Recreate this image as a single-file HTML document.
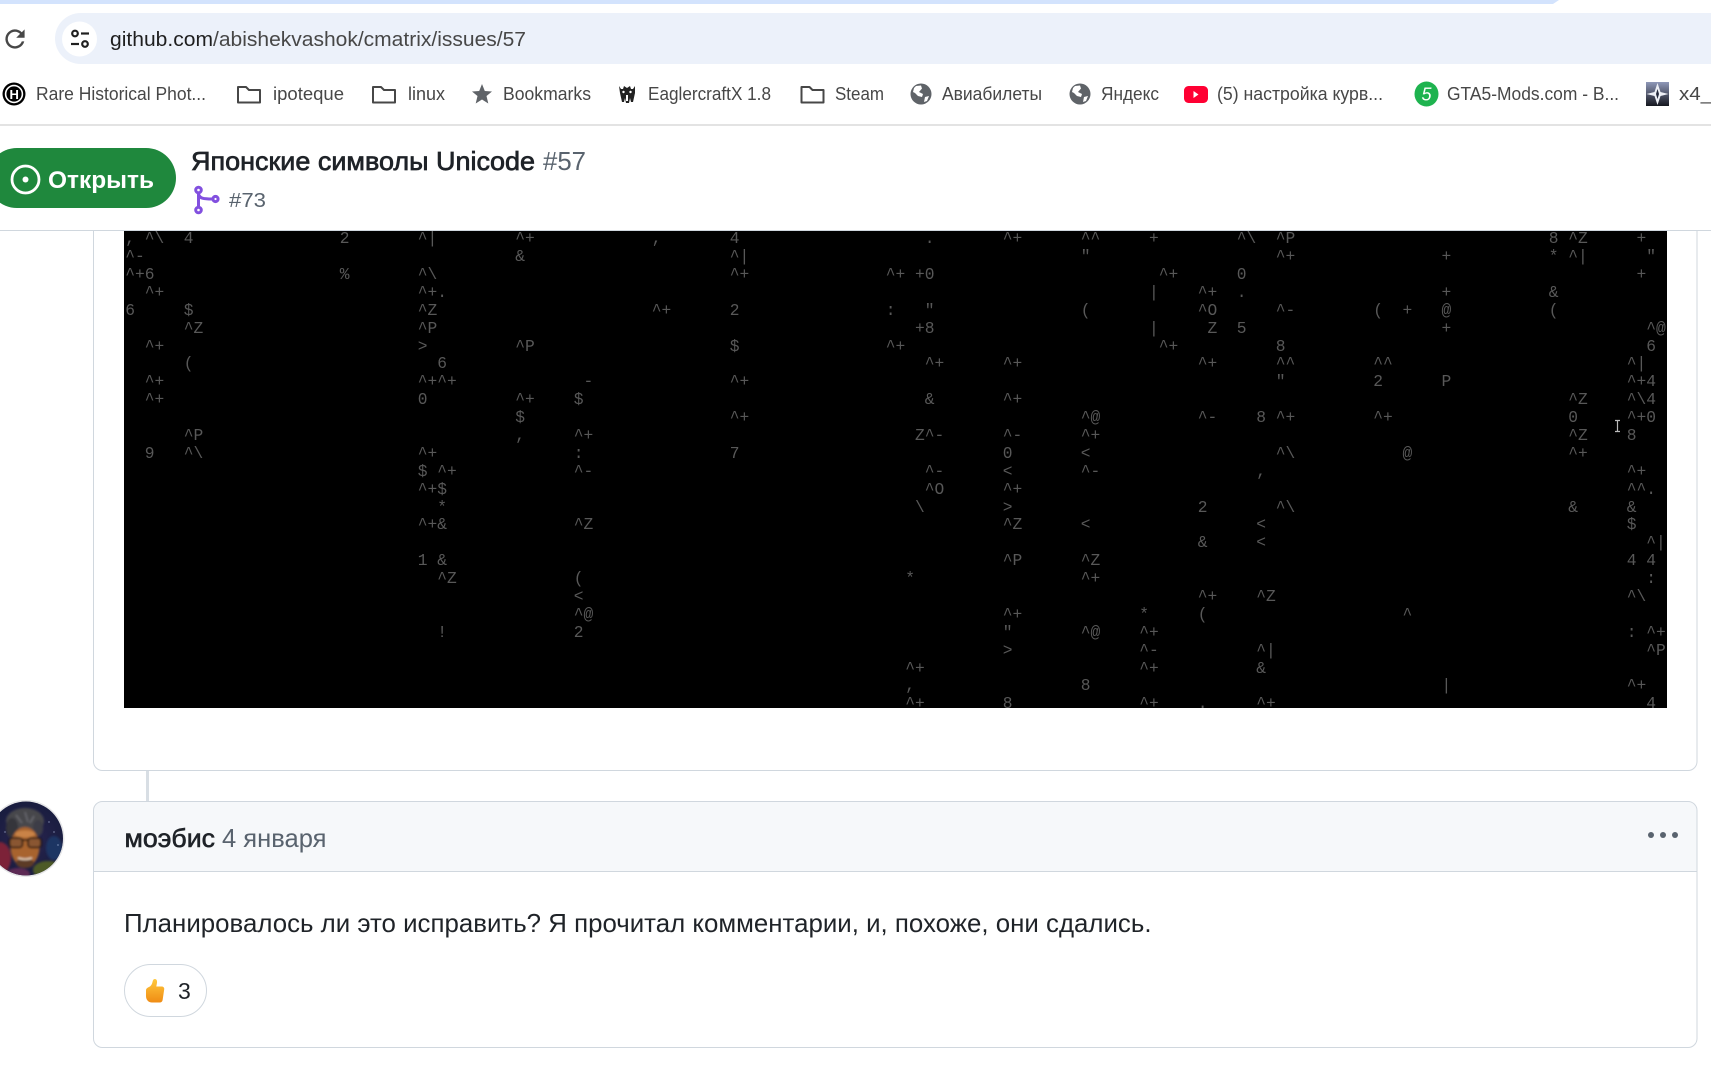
<!DOCTYPE html>
<html lang="ru"><head><meta charset="utf-8"><title>Японские символы Unicode #57</title>
<style>
html,body{margin:0;padding:0;width:1711px;height:1066px;overflow:hidden;background:#fff}
svg{position:absolute;left:0;top:0}
text{font-family:"Liberation Sans",sans-serif}
#t{position:absolute;left:124px;top:231px;width:1543px;height:477px;background:#000;overflow:hidden;font:16.25px/17.9px "Liberation Mono",monospace;color:#585858}
#t div{position:relative;height:17.9px;top:-0.8px}
#t b{position:absolute;font-weight:400;white-space:pre;left:calc(1.3px + var(--c)*9.75px)}
</style></head><body>
<svg width="1711" height="1066" viewBox="0 0 1711 1066" xmlns="http://www.w3.org/2000/svg">
<defs>
<clipPath id="av"><circle cx="26" cy="838.500" r="37"/></clipPath>
<filter id="bl"><feGaussianBlur stdDeviation="1"/></filter>
<linearGradient id="th" x1="0" y1="0" x2="0" y2="1"><stop offset="0" stop-color="#ffc83d"/><stop offset="1" stop-color="#f08c14"/></linearGradient>
<linearGradient id="x4" x1="0" y1="0" x2="0" y2="1"><stop offset="0" stop-color="#8f98b8"/><stop offset="1" stop-color="#15171f"/></linearGradient>
<radialGradient id="sky" cx="50%" cy="50%" r="60%"><stop offset="0" stop-color="#2a2550"/><stop offset="1" stop-color="#141a3a"/></radialGradient>
</defs>
<!-- browser chrome -->
<path d="M0 0H1559L1553 4H0Z" fill="#d3e3fd"/>
<rect x="55" y="13" width="1720" height="51" rx="25.5" fill="#ecf1fa"/>
<path transform="translate(.6 24.6) scale(1.2)" fill="#474747" d="M17.65 6.35A8 8 0 1 0 19.73 14h-2.08A6 6 0 1 1 12 6c1.66 0 3.14.69 4.22 1.78L13 11h7V4z"/>
<circle cx="79.500" cy="39" r="17.500" fill="#fff"/>
<g fill="none" stroke="#1f1f1f" stroke-width="2.200">
<circle cx="75" cy="33.500" r="2.800"/><path d="M81 33.500h8"/>
<circle cx="85" cy="44" r="2.800"/><path d="M71 44h8"/>
</g>
<text x="110" y="46" font-size="20" fill="#1f1f1f" textLength="103" lengthAdjust="spacingAndGlyphs">github.com</text>
<text x="213" y="46" font-size="20" fill="#474747" textLength="313" lengthAdjust="spacingAndGlyphs">/abishekvashok/cmatrix/issues/57</text>
<!-- bookmarks -->
<g font-size="18" fill="#474747">
<circle cx="14" cy="94" r="11.500" fill="#000"/><circle cx="14" cy="94" r="9.200" fill="#fff"/><circle cx="14" cy="94" r="7.600" fill="#000"/>
<text x="9.500" y="99" font-size="13" font-weight="700" fill="#fff">H</text>
<text x="36" y="100" textLength="170" lengthAdjust="spacingAndGlyphs">Rare Historical Phot...</text>
<g fill="none" stroke="#474747" stroke-width="2" stroke-linejoin="round">
<path d="M238 87h8l3 3h11v12.500h-22z"/>
<path d="M373 87h8l3 3h11v12.500h-22z"/>
<path d="M801.500 87h8l3 3h11v12.500h-22z"/>
</g>
<text x="273" y="100" textLength="71" lengthAdjust="spacingAndGlyphs">ipoteque</text>
<text x="408" y="100" textLength="37" lengthAdjust="spacingAndGlyphs">linux</text>
<polygon points="482,84 484.800,91 492,91.500 486.500,96 488.300,103.500 482,99.500 475.700,103.500 477.500,96 472,91.500 479.200,91" fill="#5f6368"/>
<text x="503" y="100" textLength="88" lengthAdjust="spacingAndGlyphs">Bookmarks</text>
<g fill="#222"><path d="M619 86l2 3h2l1-3 3 2 3-2 1 3h2l2-3v7l-2 9h-2l-1-4-1 5h-3l-1-5-1 4h-2l-2-9z"/></g>
<g fill="#fff"><circle cx="623.500" cy="92" r="1.200"/><circle cx="630.500" cy="92" r="1.200"/><rect x="626" y="95" width="2" height="6"/></g>
<text x="648" y="100" textLength="123" lengthAdjust="spacingAndGlyphs">EaglercraftX 1.8</text>
<text x="835" y="100" textLength="49" lengthAdjust="spacingAndGlyphs">Steam</text>
<circle cx="921" cy="94" r="10.500" fill="#5f6368"/>
<path d="M916 86l5-.5 1 3-3 3.500 4 2-1 3-4-1-3-3-2-1 1-4zM925 97l4-1-2 5-3 1z" fill="#fff"/>
<text x="942" y="100" textLength="100" lengthAdjust="spacingAndGlyphs">Авиабилеты</text>
<circle cx="1080" cy="94" r="10.500" fill="#5f6368"/>
<path d="M1075 86l5-.5 1 3-3 3.500 4 2-1 3-4-1-3-3-2-1 1-4zM1084 97l4-1-2 5-3 1z" fill="#fff"/>
<text x="1101" y="100" textLength="58" lengthAdjust="spacingAndGlyphs">Яндекс</text>
<rect x="1184" y="86" width="24" height="17" rx="4.500" fill="#ff0033"/><path d="M1193.500 91l5 3.500-5 3.500z" fill="#fff"/>
<text x="1217" y="100" textLength="166" lengthAdjust="spacingAndGlyphs">(5) настройка курв...</text>
<ellipse cx="1426.500" cy="94" rx="12" ry="12.500" fill="#1eb34f"/>
<text x="1421.500" y="100.500" font-size="18" font-style="italic" fill="#fff">5</text>
<text x="1447" y="100" textLength="172" lengthAdjust="spacingAndGlyphs">GTA5-Mods.com - В...</text>
<rect x="1646" y="82" width="23" height="24" fill="url(#x4)"/>
<path d="M1657.500 83l3 9 8 2-8 2-3 9-3-9-8-2 8-2z" fill="#eef0f6"/><path d="M1657.500 89l1.500 5-1.500 5-1.500-5z" fill="#23283a"/>
<text x="1679" y="100" textLength="40" lengthAdjust="spacingAndGlyphs">x4_r</text>
</g>
<rect x="0" y="124" width="1711" height="2" fill="#e3e3e3"/>
<!-- sticky header -->
<rect x="0" y="230" width="1711" height="1" fill="#d0d7de"/>
<rect x="-13" y="148" width="189" height="60" rx="30" fill="#1f883d"/>
<circle cx="25.500" cy="179.500" r="13.500" fill="none" stroke="#fff" stroke-width="2.800"/><circle cx="25.500" cy="179.500" r="3" fill="#fff"/>
<text x="48" y="188" font-size="24" font-weight="700" fill="#fff" textLength="106" lengthAdjust="spacingAndGlyphs">Открыть</text>
<text x="191" y="170" font-size="26" fill="#1f2328" stroke="#1f2328" stroke-width=".7" textLength="344" lengthAdjust="spacingAndGlyphs">Японские символы Unicode</text>
<text x="543" y="170" font-size="26" fill="#59636e" textLength="43" lengthAdjust="spacingAndGlyphs">#57</text>
<g fill="none" stroke="#8250df" stroke-width="3">
<circle cx="198.500" cy="190" r="2.800"/><circle cx="198.500" cy="210" r="2.800"/><circle cx="215.500" cy="199" r="2.600"/>
<path d="M198.500 193v14M198.500 194c1 4.500 5 5 14 5"/>
</g>
<text x="229" y="207" font-size="20" fill="#59636e" textLength="37" lengthAdjust="spacingAndGlyphs">#73</text>
<!-- first card -->
<path d="M93.500 231V761.500a9 9 0 0 0 9 9H1688a9 9 0 0 0 9-9V231" fill="none" stroke="#d0d7de"/>
<rect x="146" y="771" width="3" height="30" fill="#d8dee4"/>
<!-- second card -->
<path d="M93.500 871V810.500a9 9 0 0 1 9-9H1688a9 9 0 0 1 9 9V871Z" fill="#f6f8fa"/>
<rect x="93.500" y="801.500" width="1603.500" height="246" rx="9" fill="none" stroke="#d0d7de"/>
<rect x="94" y="871" width="1603" height="1" fill="#d0d7de"/>
<text x="124.500" y="847" font-size="26" fill="#1f2328" stroke="#1f2328" stroke-width=".6" textLength="90.500" lengthAdjust="spacingAndGlyphs">моэбис</text>
<text x="222" y="847" font-size="26" fill="#59636e" textLength="104.500" lengthAdjust="spacingAndGlyphs">4 января</text>
<g fill="#59636e"><circle cx="1651" cy="835" r="3"/><circle cx="1663" cy="835" r="3"/><circle cx="1675" cy="835" r="3"/></g>
<text x="124" y="932" font-size="26" fill="#1f2328" textLength="1027.500" lengthAdjust="spacingAndGlyphs">Планировалось ли это исправить? Я прочитал комментарии, и, похоже, они сдались.</text>
<rect x="124.500" y="964.500" width="82" height="52" rx="26" fill="#fff" stroke="#d0d7de"/>
<path d="M146 990.500c0-1.800 1.200-2.800 3-3.500 1.800-.8 3-2.500 3.500-5 .4-2 1-3 2.300-3 1.700 0 2.500 1.500 2.200 3.800l-.7 3.700h5.400c1.700 0 2.800 1.300 2.500 2.900l-1.600 10.700c-.3 1.500-1.300 2.400-3 2.400h-7.600c-3.600 0-6-2.700-6-6.500z" fill="url(#th)"/>
<text x="178" y="999" font-size="23" fill="#1f2328">3</text>
<!-- avatar -->
<circle cx="26" cy="838.500" r="38.500" fill="#e6e6e8"/>
<g clip-path="url(#av)">
<rect x="-15" y="800" width="85" height="80" fill="url(#sky)"/>
<g filter="url(#bl)">
<ellipse cx="0" cy="858" rx="11" ry="16" fill="#7c2238"/>
<ellipse cx="48" cy="870" rx="15" ry="9" fill="#4e5a26"/>
<ellipse cx="18" cy="874" rx="12" ry="6" fill="#5d2a55"/>
<ellipse cx="54" cy="848" rx="8" ry="12" fill="#1c3564"/>
<ellipse cx="25" cy="821" rx="19" ry="13" fill="#46464c"/>
<ellipse cx="12" cy="828" rx="6" ry="10" fill="#34343a"/>
<ellipse cx="38" cy="828" rx="5" ry="8" fill="#3e3e46"/>
<path d="M16 815l6 8M25 812l3 10M34 816l-4 7" stroke="#6e6e74" stroke-width="1.300"/>
<ellipse cx="25" cy="847" rx="14.500" ry="20" fill="#a8642f"/>
<ellipse cx="25" cy="863" rx="9" ry="5" fill="#5c3a28"/>
<ellipse cx="25" cy="834" rx="10" ry="3.500" fill="#c98346"/>
<rect x="9.500" y="838" width="13" height="9.500" rx="3" fill="#8a5730" stroke="#16100c" stroke-width="1.500"/>
<rect x="28" y="838" width="13" height="9.500" rx="3" fill="#8a5730" stroke="#16100c" stroke-width="1.500"/>
<path d="M22 840h6" stroke="#16100c" stroke-width="1.500"/>
<path d="M18 858q7 2.500 14 0" stroke="#e8d0b8" stroke-width="1.800" fill="none"/>
</g>
<g fill="#b8c4e8"><circle cx="54" cy="832" r=".6"/><circle cx="49" cy="822" r=".6"/><circle cx="58" cy="845" r=".6"/><circle cx="5" cy="832" r=".6"/></g>
</g>
</svg>
<div id="t">
<div><b style="--c:0">,</b><b style="--c:2">^\</b><b style="--c:6">4</b><b style="--c:22">2</b><b style="--c:30">^|</b><b style="--c:40">^+</b><b style="--c:54">,</b><b style="--c:62">4</b><b style="--c:82">.</b><b style="--c:90">^+</b><b style="--c:98">^^</b><b style="--c:105">+</b><b style="--c:114">^\</b><b style="--c:118">^P</b><b style="--c:146">8</b><b style="--c:148">^Z</b><b style="--c:155">+</b></div>
<div><b style="--c:0">^-</b><b style="--c:40">&amp;</b><b style="--c:62">^|</b><b style="--c:98">"</b><b style="--c:118">^+</b><b style="--c:135">+</b><b style="--c:146">*</b><b style="--c:148">^|</b><b style="--c:156">"</b></div>
<div><b style="--c:0">^+6</b><b style="--c:22">%</b><b style="--c:30">^\</b><b style="--c:62">^+</b><b style="--c:78">^+</b><b style="--c:81">+0</b><b style="--c:106">^+</b><b style="--c:114">0</b><b style="--c:155">+</b></div>
<div><b style="--c:2">^+</b><b style="--c:30">^+.</b><b style="--c:105">|</b><b style="--c:110">^+</b><b style="--c:114">.</b><b style="--c:135">+</b><b style="--c:146">&amp;</b></div>
<div><b style="--c:0">6</b><b style="--c:6">$</b><b style="--c:30">^Z</b><b style="--c:54">^+</b><b style="--c:62">2</b><b style="--c:78">:</b><b style="--c:82">"</b><b style="--c:98">(</b><b style="--c:110">^O</b><b style="--c:118">^-</b><b style="--c:128">(</b><b style="--c:131">+</b><b style="--c:135">@</b><b style="--c:146">(</b></div>
<div><b style="--c:6">^Z</b><b style="--c:30">^P</b><b style="--c:81">+8</b><b style="--c:105">|</b><b style="--c:111">Z</b><b style="--c:114">5</b><b style="--c:135">+</b><b style="--c:156">^@</b></div>
<div><b style="--c:2">^+</b><b style="--c:30">&gt;</b><b style="--c:40">^P</b><b style="--c:62">$</b><b style="--c:78">^+</b><b style="--c:106">^+</b><b style="--c:118">8</b><b style="--c:156">6</b></div>
<div><b style="--c:6">(</b><b style="--c:32">6</b><b style="--c:82">^+</b><b style="--c:90">^+</b><b style="--c:110">^+</b><b style="--c:118">^^</b><b style="--c:128">^^</b><b style="--c:154">^|</b></div>
<div><b style="--c:2">^+</b><b style="--c:30">^+^+</b><b style="--c:47">-</b><b style="--c:62">^+</b><b style="--c:118">"</b><b style="--c:128">2</b><b style="--c:135">P</b><b style="--c:154">^+4</b></div>
<div><b style="--c:2">^+</b><b style="--c:30">0</b><b style="--c:40">^+</b><b style="--c:46">$</b><b style="--c:82">&amp;</b><b style="--c:90">^+</b><b style="--c:148">^Z</b><b style="--c:154">^\4</b></div>
<div><b style="--c:40">$</b><b style="--c:62">^+</b><b style="--c:98">^@</b><b style="--c:110">^-</b><b style="--c:116">8</b><b style="--c:118">^+</b><b style="--c:128">^+</b><b style="--c:148">0</b><b style="--c:154">^+0</b></div>
<div><b style="--c:6">^P</b><b style="--c:40">,</b><b style="--c:46">^+</b><b style="--c:81">Z^-</b><b style="--c:90">^-</b><b style="--c:98">^+</b><b style="--c:148">^Z</b><b style="--c:154">8</b></div>
<div><b style="--c:2">9</b><b style="--c:6">^\</b><b style="--c:30">^+</b><b style="--c:46">:</b><b style="--c:62">7</b><b style="--c:90">0</b><b style="--c:98">&lt;</b><b style="--c:118">^\</b><b style="--c:131">@</b><b style="--c:148">^+</b></div>
<div><b style="--c:30">$</b><b style="--c:32">^+</b><b style="--c:46">^-</b><b style="--c:82">^-</b><b style="--c:90">&lt;</b><b style="--c:98">^-</b><b style="--c:116">,</b><b style="--c:154">^+</b></div>
<div><b style="--c:30">^+$</b><b style="--c:82">^O</b><b style="--c:90">^+</b><b style="--c:154">^^.</b></div>
<div><b style="--c:32">*</b><b style="--c:81">\</b><b style="--c:90">&gt;</b><b style="--c:110">2</b><b style="--c:118">^\</b><b style="--c:148">&amp;</b><b style="--c:154">&amp;</b></div>
<div><b style="--c:30">^+&amp;</b><b style="--c:46">^Z</b><b style="--c:90">^Z</b><b style="--c:98">&lt;</b><b style="--c:116">&lt;</b><b style="--c:154">$</b></div>
<div><b style="--c:110">&amp;</b><b style="--c:116">&lt;</b><b style="--c:156">^|</b></div>
<div><b style="--c:30">1</b><b style="--c:32">&amp;</b><b style="--c:90">^P</b><b style="--c:98">^Z</b><b style="--c:154">4</b><b style="--c:156">4</b></div>
<div><b style="--c:32">^Z</b><b style="--c:46">(</b><b style="--c:80">*</b><b style="--c:98">^+</b><b style="--c:156">:</b></div>
<div><b style="--c:46">&lt;</b><b style="--c:110">^+</b><b style="--c:116">^Z</b><b style="--c:154">^\</b></div>
<div><b style="--c:46">^@</b><b style="--c:90">^+</b><b style="--c:104">*</b><b style="--c:110">(</b><b style="--c:131">^</b></div>
<div><b style="--c:32">!</b><b style="--c:46">2</b><b style="--c:90">"</b><b style="--c:98">^@</b><b style="--c:104">^+</b><b style="--c:154">:</b><b style="--c:156">^+</b></div>
<div><b style="--c:90">&gt;</b><b style="--c:104">^-</b><b style="--c:116">^|</b><b style="--c:156">^P</b></div>
<div><b style="--c:80">^+</b><b style="--c:104">^+</b><b style="--c:116">&amp;</b></div>
<div><b style="--c:80">,</b><b style="--c:98">8</b><b style="--c:135">|</b><b style="--c:154">^+</b></div>
<div><b style="--c:80">^+</b><b style="--c:90">8</b><b style="--c:104">^+</b><b style="--c:110">.</b><b style="--c:116">^+</b><b style="--c:156">4</b></div>
</div>
<svg width="1711" height="1066" viewBox="0 0 1711 1066" xmlns="http://www.w3.org/2000/svg" style="pointer-events:none">
<path d="M1615 420.500h5M1615 431.500h5M1617.500 421v10" stroke="#bbb" stroke-width="1.200" fill="none"/>
</svg>
</body></html>
